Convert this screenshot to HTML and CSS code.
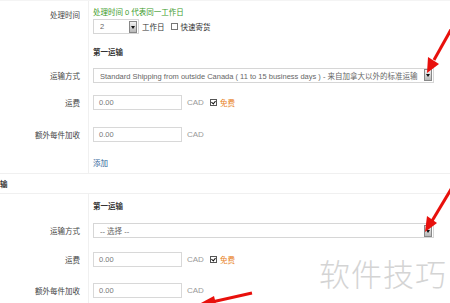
FILE: index.html
```html
<!DOCTYPE html>
<html lang="zh-CN">
<head>
    <meta charset="UTF-8">
    <meta name="viewport" content="width=device-width, initial-scale=1.0">
    <title>运输设置</title>
    <link rel="stylesheet" href="styles.css">
</head>
<body>
    <div id="page">
        <div class="row h-time">
            <div class="label">处理时间</div>
            <div class="field stack">
                <div class="hint">处理时间 0 代表同一工作日</div>
                <div class="inline">
                    <span class="select days"><span class="val">2</span><span class="drop"></span></span>
                    <span class="txt">工作日</span>
                    <span class="check"></span>
                    <span class="txt">快速寄货</span>
                </div>
            </div>
        </div>
        <div class="row h-sub1">
            <div class="label"></div>
            <div class="field"><span class="sub">第一运输</span></div>
        </div>
        <div class="row h-method1">
            <div class="label">运输方式</div>
            <div class="field">
                <span class="select wide"><span class="val">Standard Shipping from outside Canada ( 11 to 15 business days ) - 来自加拿大以外的标准运输</span><span class="drop"></span></span>
            </div>
        </div>
        <div class="row h-fee1">
            <div class="label">运费</div>
            <div class="field">
                <span class="input">0.00</span>
                <span class="unit">CAD</span>
                <span class="check on"></span>
                <span class="free">免费</span>
            </div>
        </div>
        <div class="row h-extra1">
            <div class="label">额外每件加收</div>
            <div class="field">
                <span class="input">0.00</span>
                <span class="unit">CAD</span>
            </div>
        </div>
        <div class="row h-add">
            <div class="label"></div>
            <div class="field"><a class="add" href="#">添加</a></div>
        </div>

        <div class="section">输</div>

        <div class="row h-sub2">
            <div class="label"></div>
            <div class="field"><span class="sub">第一运输</span></div>
        </div>
        <div class="row h-method2">
            <div class="label">运输方式</div>
            <div class="field">
                <span class="select wide"><span class="val">-- 选择 --</span><span class="drop"></span></span>
            </div>
        </div>
        <div class="row h-fee2">
            <div class="label">运费</div>
            <div class="field">
                <span class="input">0.00</span>
                <span class="unit">CAD</span>
                <span class="check on"></span>
                <span class="free">免费</span>
            </div>
        </div>
        <div class="row h-extra2">
            <div class="label">额外每件加收</div>
            <div class="field">
                <span class="input">0.00</span>
                <span class="unit">CAD</span>
            </div>
        </div>

        <div class="watermark">软件技巧</div>

        <svg class="arrows" width="450" height="303" viewBox="0 0 450 303">
            <line x1="453" y1="25" x2="434" y2="59" stroke="#e8100c" stroke-width="3" />
            <polygon points="427,72 439,63 428,56" fill="#e8100c" />
            <line x1="453" y1="185" x2="432" y2="220" stroke="#e8100c" stroke-width="3" />
            <polygon points="425,231 437,222 427,215" fill="#e8100c" />
            <line x1="252" y1="292" x2="212" y2="301" stroke="#e8100c" stroke-width="3" />
            <polygon points="186,310 214,295 218,311" fill="#e8100c" />
        </svg>
    </div>
</body>
</html>
```

FILE: styles.css
```css
body {
    margin: 0;
    background: #fff;
    font-family: "Liberation Sans", Arial, "Noto Sans CJK SC", sans-serif;
    font-size: 7.5px;
    color: #444;
    overflow: hidden;
}

#page {
    position: relative;
    width: 450px;
    height: 303px;
    overflow: hidden;
    border-top: 1px solid #f4f4f4;
    box-sizing: border-box;
}

.row {
    display: flex;
}

.label {
    width: 80px;
    padding-right: 8px;
    text-align: right;
    display: flex;
    align-items: center;
    justify-content: flex-end;
    color: #444;
}

.field {
    flex: 1;
    border-left: 1px solid #f0f0f0;
    padding-left: 4px;
    display: flex;
    align-items: center;
}

.field.stack {
    flex-direction: column;
    align-items: flex-start;
    justify-content: flex-start;
    padding-top: 7px;
}

.h-time .label {
    align-items: flex-start;
    padding-top: 8px;
    height: 10px;
}

.h-time { height: 40px; }
.h-sub1 { height: 20px; }
.h-method1 { height: 28px; }
.h-fee1 { height: 27px; }
.h-extra1 { height: 36px; }
.h-add { height: 21px; }
.h-sub2 { height: 23px; }
.h-method2 { height: 27px; }
.h-fee2 { height: 30px; }
.h-extra2 { height: 32px; }

.hint {
    color: #3a9a2a;
    line-height: 10px;
    margin-bottom: 1px;
}

.inline {
    display: flex;
    align-items: center;
    height: 15px;
}

.txt {
    margin: 0 3px;
    color: #333;
}

.sub {
    font-weight: bold;
    color: #333;
}

.select {
    display: flex;
    align-items: center;
    height: 15px;
    box-sizing: border-box;
    border: 1px solid #d6d6d6;
    background: #fff;
    color: #666;
    padding-left: 6px;
    padding-right: 1px;
}

.select .val {
    flex: 1;
    white-space: nowrap;
    overflow: hidden;
}

.days { width: 46px; }
.wide { width: 341px; }

.drop {
    width: 8px;
    height: 12px;
    box-sizing: border-box;
    border: 1px solid #888;
    background: linear-gradient(#f2f2f2, #b8b8b8);
    position: relative;
}

.drop::after {
    content: "";
    position: absolute;
    left: 1px;
    top: 4px;
    border-left: 2px solid transparent;
    border-right: 2px solid transparent;
    border-top: 3px solid #111;
}

.input {
    width: 89px;
    height: 15px;
    box-sizing: border-box;
    border: 1px solid #d8d8d8;
    padding-left: 5px;
    color: #777;
    display: flex;
    align-items: center;
}

.unit {
    margin-left: 5px;
    color: #999;
    font-size: 8px;
}

.check {
    width: 7px;
    height: 7px;
    box-sizing: border-box;
    border: 1px solid #777;
    background: #fff;
    margin-left: 3px;
    position: relative;
}

.check.on {
    margin-left: 6px;
    border-color: #555;
}

.check.on::after {
    content: "";
    position: absolute;
    left: 1px;
    top: 0;
    width: 2px;
    height: 3px;
    border-right: 1.5px solid #111;
    border-bottom: 1.5px solid #111;
    transform: rotate(40deg);
}

.free {
    color: #e8821e;
    margin-left: 3px;
}

.add {
    color: #33669a;
    text-decoration: none;
}

.section {
    border-top: 1px solid #f0f0f0;
    border-bottom: 1px solid #f0f0f0;
    height: 19px;
    display: flex;
    align-items: center;
    font-weight: bold;
    color: #333;
}

.watermark {
    position: absolute;
    left: 319px;
    top: 249px;
    font-family: "Noto Sans CJK SC", sans-serif;
    font-size: 31px;
    font-weight: 300;
    color: #d4d4d4;
    letter-spacing: 1px;
}

.arrows {
    position: absolute;
    left: 0;
    top: 0;
}
```
